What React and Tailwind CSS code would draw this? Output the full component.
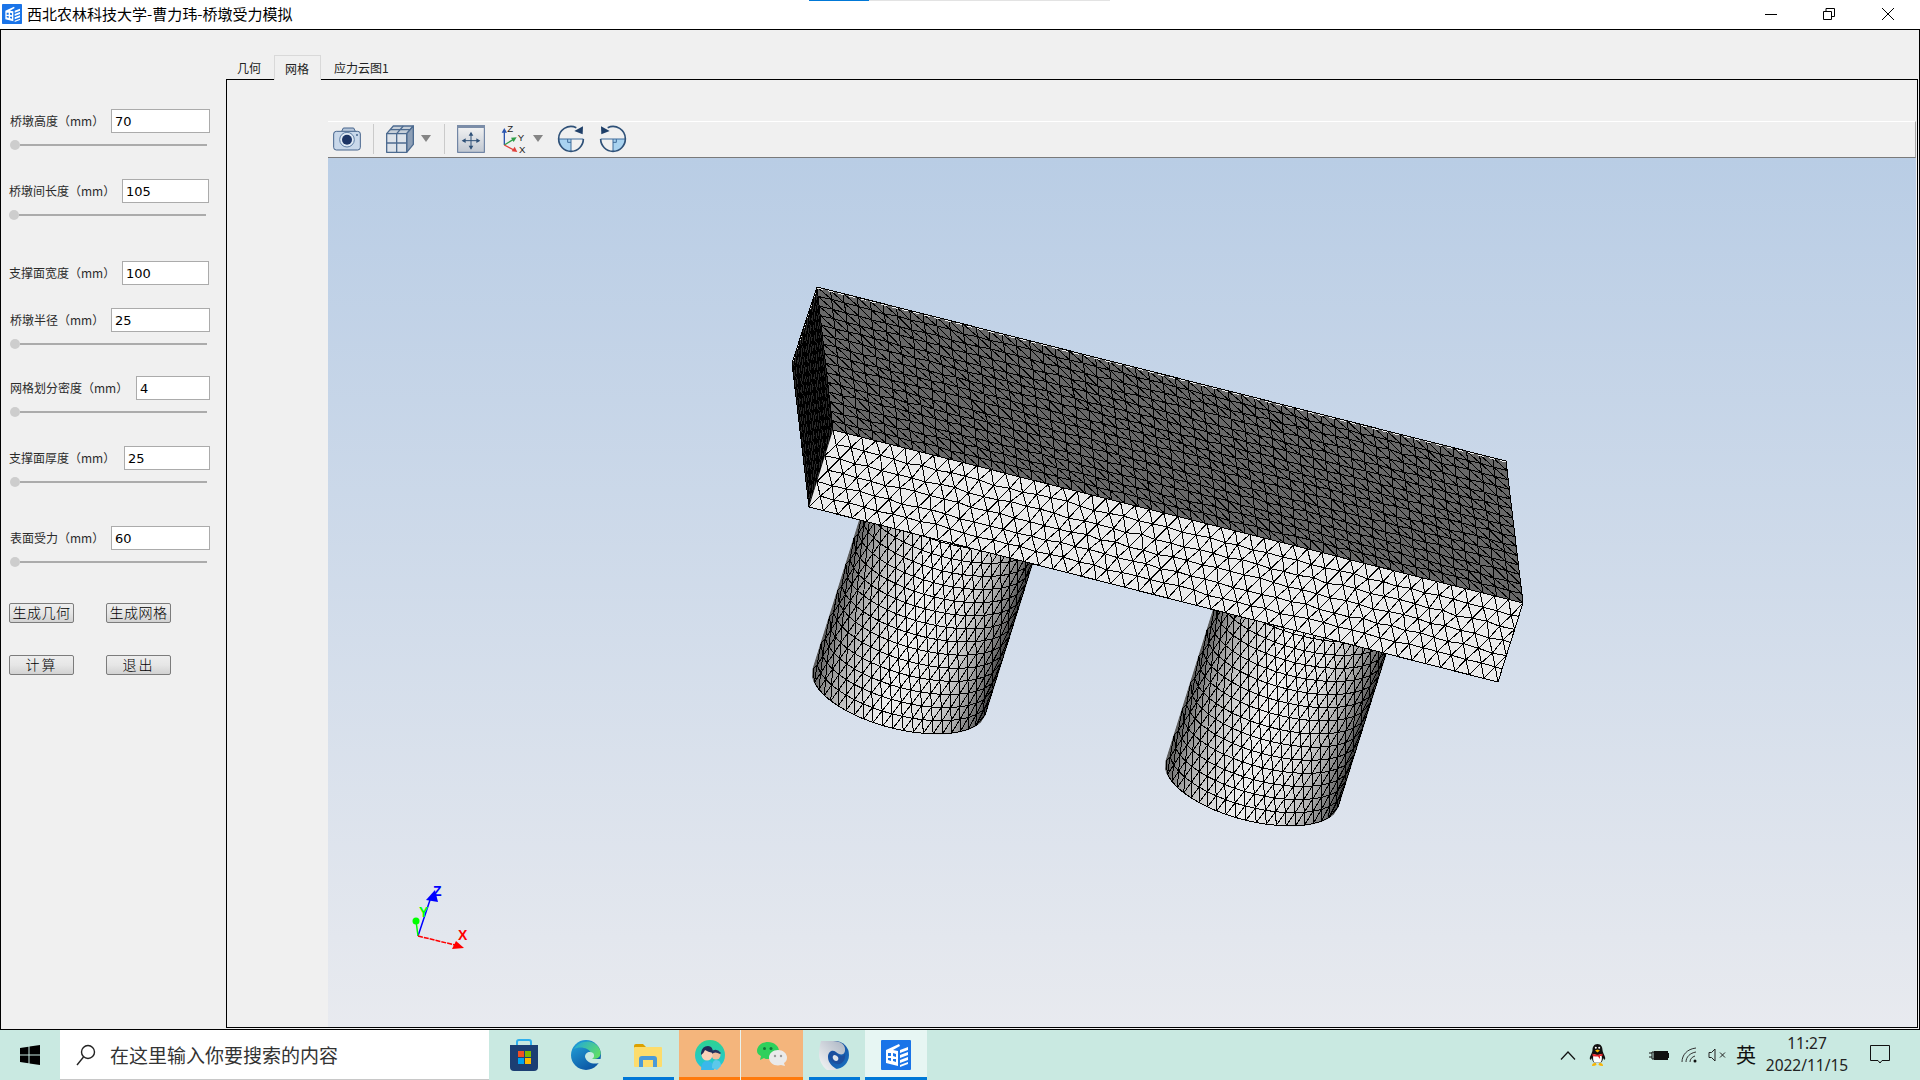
import React from 'react';

const cjk = "font-['Noto_Sans_CJK_SC',sans-serif]";

// ---------- mesh helpers ----------
const mix = (a, b, t) => [a[0] + (b[0] - a[0]) * t, a[1] + (b[1] - a[1]) * t];
const wobble = (i, j, k) => {
  const s = Math.sin(i * 12.9898 + j * 78.233 + k) * 43758.5453;
  return s - Math.floor(s) - 0.5;
};

function quadMesh(p00, p10, p01, p11, cols, rows, amount, stagger) {
  const pts = [];
  for (let j = 0; j <= rows; j++) {
    const row = [];
    for (let i = 0; i <= cols; i++) {
      const u = Math.min(1, (i + (stagger && j % 2 ? 0.5 : 0)) / cols);
      const p = mix(mix(p00, p10, u), mix(p01, p11, u), j / rows);
      const inner = i > 0 && i < cols && j > 0 && j < rows;
      row.push(inner ? [p[0] + wobble(i, j, 1) * amount, p[1] + wobble(i, j, 7) * amount] : p);
    }
    pts.push(row);
  }
  return meshPath(pts, stagger);
}

// stagger: every other row is shifted half a cell, so the diagonal flips row by row
function meshPath(pts, stagger) {
  const f = (p) => `${p[0].toFixed(1)} ${p[1].toFixed(1)}`;
  let d = '';
  pts.forEach((row, j) => {
    row.forEach((p, i) => {
      if (i < row.length - 1) d += `M${f(p)}L${f(row[i + 1])}`;
      if (j < pts.length - 1) {
        d += `M${f(p)}L${f(pts[j + 1][i])}`;
        if (i < row.length - 1) {
          const down = stagger ? j % 2 === 1 : true;
          d += down ? `M${f(p)}L${f(pts[j + 1][i + 1])}` : `M${f(row[i + 1])}L${f(pts[j + 1][i])}`;
        }
      }
    });
  });
  return d;
}

const stops = [[0, 85], [0.1, 150], [0.25, 205], [0.45, 238], [0.7, 222], [0.85, 170], [0.95, 115], [1, 60]];
function shade(f) {
  for (let i = 1; i < stops.length; i++) {
    if (f <= stops[i][0]) {
      const t = (f - stops[i - 1][0]) / (stops[i][0] - stops[i - 1][0]);
      const v = Math.round(stops[i - 1][1] + (stops[i][1] - stops[i - 1][1]) * t);
      return `rgb(${v},${v},${v})`;
    }
  }
  return 'rgb(60,60,60)';
}

function cylinder(cx, cy) {
  const cols = 21;
  const rows = 16;
  const spot = (u) => 0.4 * -Math.cos(Math.PI * u) + 0.6 * (2 * u - 1);
  const pts = [];
  for (let j = 0; j <= rows; j++) {
    const t = (j / rows) * 1.4;
    const row = [];
    for (let i = 0; i <= cols; i++) {
      const u = Math.min(1, (i + (j % 2 ? 0.5 : 0)) / cols);
      const c = spot(u);
      const s = Math.sqrt(Math.max(0, 1 - c * c));
      row.push([cx + 86 * c - 11 * s + 47 * t, cy + 23 * c + 35 * s - 150 * t]);
    }
    pts.push(row);
  }
  // shading strips are finer than the mesh
  const strips = [];
  const n = 48;
  const at = (u, t) => {
    const c = spot(u);
    const s = Math.sqrt(Math.max(0, 1 - c * c));
    return [cx + 86 * c - 11 * s + 47 * t, cy + 23 * c + 35 * s - 150 * t];
  };
  for (let i = 0; i < n; i++) {
    const a = at(i / n, 0), b = at((i + 1) / n, 0), c = at((i + 1) / n, 1.4), e = at(i / n, 1.4);
    strips.push({
      points: [a, b, c, e].map((p) => p.join(',')).join(' '),
      fill: shade((1 + spot((i + 0.5) / n)) / 2),
    });
  }
  return { strips, d: meshPath(pts, true) };
}

const A = [817, 287], B = [1506, 461], C = [1523, 603], D = [833, 430], E = [792, 363], F = [809, 507], G = [1498, 682];
const topMesh = quadMesh(A, B, D, C, 52, 15, 1.5, false);
const leftMesh = quadMesh(A, E, D, F, 7, 15, 0.5, false);
const frontMesh = quadMesh(D, C, F, G, 48, 6, 2.5, true);
const pier1 = cylinder(899, 692);
const pier2 = cylinder(1252, 784);

function Pier({ data }) {
  return (
    <g>
      {data.strips.map((s, i) => <polygon key={i} points={s.points} fill={s.fill} stroke={s.fill} />)}
      <path d={data.d} stroke="#000" fill="none" shapeRendering="crispEdges" />
    </g>
  );
}

function Model() {
  const pts = (...p) => p.map((q) => q.join(',')).join(' ');
  return (
    <svg className="block w-[1588px] h-[869px]" viewBox="328 158 1588 869">
      <Pier data={pier1} />
      <Pier data={pier2} />
      <polygon points={pts(A, E, F, D)} fill="#2a2a2a" />
      <path d={leftMesh} stroke="#000" fill="none" shapeRendering="crispEdges" />
      <polygon points={pts(A, B, C, D)} fill="#686868" />
      <path d={topMesh} stroke="#000" fill="none" shapeRendering="crispEdges" />
      <polygon points={pts(D, C, G, F)} fill="#ebebeb" />
      <path d={frontMesh} stroke="#000" fill="none" shapeRendering="crispEdges" />
      <polyline points="793,361 817,288 1506,462" fill="none" stroke="#eee" strokeDasharray="6 5" shapeRendering="crispEdges" />
      <polygon points={pts(A, B, C, G, F, E)} fill="none" stroke="#000" shapeRendering="crispEdges" />

      {/* orientation marker */}
      <line x1="418" y1="936" x2="431" y2="897" stroke="#0000ff" strokeWidth="1.5" />
      <polygon points="435,890 438,902 426,900" fill="#0000ff" />
      <line x1="418" y1="936" x2="416" y2="921" stroke="#00ff00" strokeWidth="1.5" />
      <circle cx="416" cy="921" r="3.5" fill="#00ff00" />
      <line x1="418" y1="936" x2="455" y2="945" stroke="#ff0000" strokeWidth="1.5" strokeDasharray="5 1" />
      <polygon points="464,948 452,949 456,941" fill="#ff0000" />
      <text x="433" y="896" fontSize="14" fontWeight="700" fill="#0000ff" fontFamily="Liberation Sans, sans-serif">Z</text>
      <text x="419" y="917" fontSize="14" fontWeight="700" fill="#00ff00" fontFamily="Liberation Sans, sans-serif">Y</text>
      <text x="458" y="940" fontSize="14" fontWeight="700" fill="#ff0000" fontFamily="Liberation Sans, sans-serif">X</text>
    </svg>
  );
}

// ---------- toolbar icons ----------
function CameraIcon() {
  return (
    <svg width="28" height="24" viewBox="0 0 84 72" className="shrink-0">
      <path d="M26 13L31 3H62L67 13" fill="#b7c7da" stroke="#46648c" strokeWidth="3" />
      <rect x="2" y="13" width="80" height="56" rx="8" fill="#c9d8ea" stroke="#46648c" strokeWidth="3" />
      <circle cx="42" cy="38" r="22" fill="#e0eaf5" stroke="#5e7ea5" strokeWidth="3" />
      <circle cx="42" cy="38" r="15" fill="#1d3566" />
      <circle cx="72" cy="24" r="3" fill="#44648c" />
    </svg>
  );
}

function CubeIcon() {
  return (
    <svg width="28" height="28" viewBox="0 0 84 84" className="shrink-0">
      <g stroke="#4d6b90" strokeWidth="4" strokeLinejoin="round">
        <polygon points="2,26 22,3 82,3 62,26" fill="#c6cfd9" />
        <polygon points="62,26 82,3 82,58 62,82" fill="#8d9fb6" />
        <rect x="2" y="26" width="60" height="56" fill="#dde3ea" />
        <path d="M32 26V82M2 54H62M32 26L52 3M12 14H72" fill="none" />
      </g>
    </svg>
  );
}

function PanIcon() {
  return (
    <svg width="28" height="28" viewBox="0 0 84 84" className="shrink-0">
      <defs>
        <linearGradient id="panBg" x1="0" y1="0" x2="0" y2="1">
          <stop offset="0" stopColor="#f4f4f4" />
          <stop offset="1" stopColor="#c0c7d1" />
        </linearGradient>
      </defs>
      <rect x="2" y="2" width="80" height="80" fill="url(#panBg)" stroke="#5b7398" strokeWidth="3" />
      <rect x="0" y="0" width="84" height="9" fill="#7b8da8" />
      <path d="M18 47H66M42 24V70" stroke="#2f5178" strokeWidth="3" />
      <path d="M14 47L26 40V54ZM70 47L58 40V54ZM42 20L35 32H49ZM42 74L35 62H49Z" fill="#2f5178" />
    </svg>
  );
}

function AxesIcon() {
  return (
    <svg width="26" height="30" viewBox="0 0 78 90" className="shrink-0">
      <path d="M13 63V22" stroke="#2a55b0" strokeWidth="4" />
      <path d="M13 12L5 26H21Z" fill="#2a55b0" />
      <path d="M13 63L40 46" stroke="#2f9e48" strokeWidth="4" />
      <path d="M50 40L33 41L41 54Z" fill="#2f9e48" />
      <path d="M13 63L42 78" stroke="#e0403a" strokeWidth="4" />
      <path d="M52 84L44 68L35 82Z" fill="#e0403a" />
      <g fontFamily="Liberation Sans, sans-serif" fontSize="29" fill="#222">
        <text x="22" y="24">Z</text>
        <text x="53" y="50">Y</text>
        <text x="57" y="88">X</text>
      </g>
    </svg>
  );
}

function RotateIcon({ flip }) {
  return (
    <svg width="28" height="28" viewBox="0 0 84 84" className={flip ? 'shrink-0 -scale-x-100' : 'shrink-0'}>
      <path d="M5 42H42V79A37 37 0 0 1 5 42Z" fill="#a9d3f0" />
      <path d="M5 42H79M42 42V79M32 42V52H42" fill="none" stroke="#3f6d9c" strokeWidth="3" />
      <path d="M79 42A37 37 0 1 1 5 42A37 37 0 0 1 58 8" fill="none" stroke="#2f5178" strokeWidth="5" />
      <path d="M78 4L77 28L52 18Z" fill="#1f3f68" />
    </svg>
  );
}

function Caret() {
  return (
    <svg width="10" height="7" viewBox="0 0 10 7" className="shrink-0">
      <polygon points="0,0 10,0 5,7" fill="#858585" />
    </svg>
  );
}

function AppIcon({ size }) {
  return (
    <svg width={size} height={size} viewBox="0 0 30 30" className="shrink-0">
      <rect width="30" height="30" rx="1" fill="#1a74e8" />
      <path d="M5 10L18 4L19 6L12 10L17 11V26L5 23Z" fill="#fff" />
      <path d="M19 10L27 7V10L19 13ZM19 15L27 12V15L19 18ZM19 20L27 17V20L19 23ZM19 25L27 22V24L19 27Z" fill="#fff" />
      <path d="M7 13L10 13V16L7 16ZM12 13L15 14V17L12 16ZM7 18L10 18V21L7 20ZM12 19L15 19V22L12 21Z" fill="#1a74e8" />
    </svg>
  );
}

// ---------- taskbar icons ----------
function StoreIcon() {
  return (
    <svg width="30" height="32" viewBox="0 0 30 32">
      <path d="M8 7V3Q8 1 10 1H20Q22 1 22 3V7" fill="none" stroke="#2fb0ee" strokeWidth="2" />
      <path d="M1 6H29V28Q29 32 25 32H5Q1 32 1 28Z" fill="#1c3f73" />
      <rect x="9" y="12" width="6" height="6" fill="#f25022" />
      <rect x="16" y="12" width="6" height="6" fill="#7fba00" />
      <rect x="9" y="19" width="6" height="6" fill="#00a4ef" />
      <rect x="16" y="19" width="6" height="6" fill="#ffb900" />
    </svg>
  );
}

function EdgeIcon() {
  return (
    <svg width="30" height="30" viewBox="0 0 30 30">
      <defs>
        <linearGradient id="edgeA" x1="0" y1="0" x2="0.6" y2="1">
          <stop offset="0" stopColor="#25a8dd" />
          <stop offset="1" stopColor="#0b56a4" />
        </linearGradient>
        <linearGradient id="edgeB" x1="0" y1="0" x2="1" y2="0.6">
          <stop offset="0" stopColor="#1fa6df" />
          <stop offset="1" stopColor="#5fdc6a" />
        </linearGradient>
      </defs>
      <circle cx="15" cy="15" r="15" fill="url(#edgeA)" />
      <path d="M3 9C8 0 24 -2 29 10C31 15 28 19 23 19L17 19C21 17 21 11 16 9C12 7 7 7 3 9Z" fill="url(#edgeB)" />
      <path d="M14 17C14 12 19 11 22 13C24 15 23 18 21 19L30 19L30 22C25 25 16 24 14 17Z" fill="#c9e9e1" />
    </svg>
  );
}

function FolderIcon() {
  return (
    <svg width="28" height="23" viewBox="0 0 28 23">
      <path d="M0 2Q0 0 2 0H9L13 4H0Z" fill="#dca100" />
      <rect y="3" width="28" height="20" rx="1" fill="#fddc6b" />
      <path d="M5 23V15Q5 12 8 12H20Q23 12 23 15V23H19V16H9V23Z" fill="#4a9ad8" />
    </svg>
  );
}

function AvatarIcon() {
  return (
    <svg width="30" height="30" viewBox="0 0 30 30">
      <defs>
        <linearGradient id="avaBg" x1="0" y1="0" x2="0" y2="1">
          <stop offset="0" stopColor="#2dd391" />
          <stop offset="1" stopColor="#22c3e0" />
        </linearGradient>
      </defs>
      <circle cx="15" cy="15" r="15" fill="url(#avaBg)" />
      <path d="M6 30Q6 21 12 21Q19 21 19 30Z" fill="#3ab8ea" />
      <path d="M17 28Q17 20 21 20Q26 20 26 26L22 30Z" fill="#5cc8ea" />
      <circle cx="21" cy="15" r="4.5" fill="#f1bd9c" />
      <path d="M16 12Q21 7 26 13L25 14Q20 11 17 14Z" fill="#27335e" />
      <circle cx="12" cy="15" r="5.5" fill="#fad2ba" />
      <path d="M6 13Q7 6 13 6Q18 6 18 13Q13 12 10 10Q9 13 6 15Z" fill="#202c58" />
    </svg>
  );
}

function WechatIcon() {
  return (
    <svg width="30" height="27" viewBox="0 0 30 27">
      <path d="M11 0C17 0 22 4 22 9C22 14 17 17 11 17C9.500 17 8 17 7 16L3 18L4 14C1.500 13 0 11 0 9C0 4 5 0 11 0Z" fill="#2fd05c" />
      <circle cx="7.500" cy="6.500" r="1.500" fill="#12753a" />
      <circle cx="14" cy="6.500" r="1.500" fill="#12753a" />
      <path d="M21 8C26 8 30 11.500 30 15.500C30 18 29 20 27 21L28 24L24 23C23 23.300 22 23.500 21 23.500C16 23.500 12 20 12 15.500C12 11.500 16 8 21 8Z" fill="#eaeaea" />
      <circle cx="18" cy="14" r="1.200" fill="#999" />
      <circle cx="24" cy="14" r="1.200" fill="#999" />
    </svg>
  );
}

function SwirlIcon() {
  return (
    <svg width="30" height="30" viewBox="0 0 30 30">
      <defs>
        <linearGradient id="swirlA" x1="0" y1="0" x2="1" y2="1">
          <stop offset="0" stopColor="#123a8c" />
          <stop offset="1" stopColor="#1a74c4" />
        </linearGradient>
        <linearGradient id="swirlB" x1="0" y1="1" x2="1" y2="0">
          <stop offset="0" stopColor="#f7f7f7" />
          <stop offset="1" stopColor="#aab4c2" />
        </linearGradient>
      </defs>
      <circle cx="16" cy="15" r="14" fill="url(#swirlA)" />
      <path d="M2 1H14C22 1 27 5 26 11C25 16 20 15 17 12C13 9 9 12 9 17C9 23 14 27 19 30H8C3 26 0 20 0 14C0 9 1 5 2 1Z" fill="url(#swirlB)" />
      <path d="M11 16C11 11 15 11 18 14C21 17 25 17 26 13C27 20 23 25 18 24C14 23 11 20 11 16Z" fill="#1c4f9e" />
      <path d="M14 16C15 14 17 15 19 17C20 19 19 21 17 21C15 21 13 18 14 16Z" fill="#dfe4ea" />
    </svg>
  );
}

function PenguinIcon() {
  return (
    <svg width="17" height="22" viewBox="0 0 17 22">
      <path d="M8.500 0C12 0 13.500 3 13.500 6C13.500 8 15 10 16 13C16.500 15 16 16 15 15.500L14 14C14 16 13 18 12 18.500H5C4 18 3 16 3 14L2 15.500C1 16 0.500 15 1 13C2 10 3.500 8 3.500 6C3.500 3 5 0 8.500 0Z" fill="#111" />
      <path d="M5 10C7 11.500 10 11.500 12 10C13.500 13 13 17 11.500 18.500H5.500C4 17 3.500 13 5 10Z" fill="#fff" />
      <path d="M3.500 9.500C6 11 11 11 13.500 9.500L13.500 12L11 12L11 15L9 12.500C7 12.500 5 12.500 3.500 12Z" fill="#e5262b" />
      <path d="M6 6.500L8.500 5.500L11 6.500L8.500 8.500Z" fill="#f7b500" />
      <circle cx="6.800" cy="3.800" r="1" fill="#fff" />
      <circle cx="10.200" cy="3.800" r="1" fill="#fff" />
      <path d="M3 22Q3 18.500 7 19L7.500 21Q6 22 3 22ZM14 22Q14 18.500 10 19L9.500 21Q11 22 14 22Z" fill="#f7b500" />
    </svg>
  );
}

// ---------- sidebar pieces ----------
function Field({ label, value, mt, left, width, inputW, slider }) {
  return (
    <div className={mt}>
      <div className={`flex items-center justify-between ${left} ${width}`}>
        <span className={`${cjk} text-[12px] leading-none text-[#2b2b2b] whitespace-nowrap`}>{label}</span>
        <div className={`${inputW} h-6 border border-[#ababab] bg-white pl-[3px] font-['DejaVu_Sans',sans-serif] text-[13px] leading-[24px] text-black`}>{value}</div>
      </div>
      {slider && (
        <div className={`flex items-center h-[10px] mt-[7px] ${slider}`}>
          <div className="w-[10px] h-[10px] rounded-full bg-[#cdcdcd] shrink-0" />
          <div className="flex-1 h-[2px] bg-[#ababab]" />
        </div>
      )}
    </div>
  );
}

function Btn({ children, spread }) {
  return (
    <button className={`w-[65px] h-5 pb-[2px] flex items-center justify-center rounded-[2px] border border-[#7c7c7c] bg-linear-to-b from-[#eeeeee] via-[#e6e6e6] to-[#d2d2d2] ${cjk} text-[14px] leading-none text-black font-light ${spread ? 'tracking-[0.5px]' : 'tracking-[2px]'}`}>
      {children}
    </button>
  );
}

function Sidebar() {
  return (
    <div className="w-[225px] shrink-0">
      <Field mt="mt-[79px]" label="桥墩高度（mm）" value="70" left="ml-[9px]" width="w-[200px]" inputW="w-[99px]" slider="ml-[9px] w-[197px]" />
      <Field mt="mt-[29px]" label="桥墩间长度（mm）" value="105" left="ml-[8px]" width="w-[200px]" inputW="w-[87px]" slider="ml-[8px] w-[197px]" />
      <Field mt="mt-[41px]" label="支撑面宽度（mm）" value="100" left="ml-[8px]" width="w-[200px]" inputW="w-[87px]" />
      <Field mt="mt-[23px]" label="桥墩半径（mm）" value="25" left="ml-[9px]" width="w-[200px]" inputW="w-[99px]" slider="ml-[9px] w-[197px]" />
      <Field mt="mt-[27px]" label="网格划分密度（mm）" value="4" left="ml-[9px]" width="w-[200px]" inputW="w-[74px]" slider="ml-[9px] w-[197px]" />
      <Field mt="mt-[29px]" label="支撑面厚度（mm）" value="25" left="ml-[8px]" width="w-[201px]" inputW="w-[86px]" slider="ml-[9px] w-[197px]" />
      <Field mt="mt-[39px]" label="表面受力（mm）" value="60" left="ml-[9px]" width="w-[200px]" inputW="w-[99px]" slider="ml-[9px] w-[197px]" />
      <div className="flex gap-8 ml-2 mt-9">
        <Btn spread>生成几何</Btn>
        <Btn spread>生成网格</Btn>
      </div>
      <div className="flex gap-8 ml-2 mt-8">
        <Btn>计算</Btn>
        <Btn>退出</Btn>
      </div>
    </div>
  );
}

function Tabs() {
  const tab = `${cjk} text-[12px] leading-none text-[#222] whitespace-nowrap`;
  return (
    <div className="h-[49px] flex items-end shrink-0">
      <div className={`w-[48px] h-6 pl-[11px] pt-[7px] ${tab}`}>几何</div>
      <div className={`relative z-10 w-[47px] h-[25px] -mb-px pl-[10px] pt-[7px] border-x border-t border-[#d9d9d9] bg-[#f0f0f0] ${tab}`}>网格</div>
      <div className={`h-6 pl-[13px] pt-[7px] ${tab}`}>应力云图1</div>
    </div>
  );
}

function Toolbar() {
  return (
    <div className="h-[37px] shrink-0 flex items-center pb-[2px] border-t border-t-white border-b border-b-[#7a7a7a] border-r border-r-[#a5a5a5] bg-[#f0f0f0]">
      <div className="ml-[5px]"><CameraIcon /></div>
      <div className="ml-3 w-px h-[30px] bg-[#cacaca]" />
      <div className="ml-3"><CubeIcon /></div>
      <div className="ml-[7px]"><Caret /></div>
      <div className="ml-[13px] w-px h-[30px] bg-[#cacaca]" />
      <div className="ml-3"><PanIcon /></div>
      <div className="ml-[15px]"><AxesIcon /></div>
      <div className="ml-[7px]"><Caret /></div>
      <div className="ml-[14px]"><RotateIcon /></div>
      <div className="ml-[14px]"><RotateIcon flip /></div>
    </div>
  );
}

function TaskSlot({ children, mark, bg }) {
  return (
    <div className={`relative w-[62px] h-[50px] flex items-center justify-center ${bg || ''}`}>
      {children}
      {mark && <div className={`absolute bottom-0 h-[3px] ${mark}`} />}
    </div>
  );
}

function Taskbar() {
  return (
    <div className="h-[50px] shrink-0 flex items-center bg-[#c9e9e1]">
      <div className="w-[60px] flex justify-center">
        <svg width="20" height="20" viewBox="0 0 20 20">
          <path d="M0 3L8.500 1.800V9.500H0ZM9.500 1.600L20 0V9.500H9.500ZM0 10.500H8.500V18.200L0 17ZM9.500 10.500H20V20L9.500 18.400Z" fill="#000" />
        </svg>
      </div>
      <div className="w-[429px] h-[50px] flex items-center bg-white border-b border-[#c8c8c8]">
        <svg width="20" height="22" viewBox="0 0 20 22" className="ml-[16px]">
          <circle cx="12" cy="8" r="6.500" fill="none" stroke="#222" strokeWidth="1.400" />
          <path d="M7.500 13L1 21" stroke="#222" strokeWidth="1.400" />
        </svg>
        <span className={`ml-[14px] ${cjk} text-[19px] leading-none text-[#333] whitespace-nowrap`}>在这里输入你要搜索的内容</span>
      </div>
      <div className="flex ml-1">
        <TaskSlot><StoreIcon /></TaskSlot>
        <TaskSlot><EdgeIcon /></TaskSlot>
        <TaskSlot mark="left-[6px] right-[5px] bg-[#0078d7]"><FolderIcon /></TaskSlot>
        <TaskSlot bg="bg-[#f4b57c] border-r border-[#e8f2ee]" mark="left-0 right-0 bg-[#ff7a0c]"><AvatarIcon /></TaskSlot>
        <TaskSlot bg="bg-[#f4b57c]" mark="left-0 right-0 bg-[#ff7a0c]"><WechatIcon /></TaskSlot>
        <TaskSlot mark="left-[6px] right-[5px] bg-[#0078d7]"><SwirlIcon /></TaskSlot>
        <TaskSlot bg="bg-[#e7f6f3]" mark="left-0 right-0 bg-[#0078d7]"><AppIcon size={30} /></TaskSlot>
      </div>

      <div className="flex items-center ml-auto h-full">
        <svg width="16" height="9" viewBox="0 0 16 9" fill="none" stroke="#111" strokeWidth="1.200">
          <path d="M1 8.500L8 1L15 8.500" />
        </svg>
        <div className="ml-[13px]"><PenguinIcon /></div>
        <svg width="20" height="11" viewBox="0 0 20 11" className="ml-[43px]">
          <path d="M0 3H3M0 7H3M3 2H5V9H3Z" fill="none" stroke="#111" />
          <rect x="5" y="1" width="14" height="9" fill="#111" />
          <rect x="19" y="3" width="1" height="5" fill="#111" />
        </svg>
        <svg width="16" height="16" viewBox="0 0 16 16" fill="none" stroke="#333" className="ml-[12px]">
          <path d="M1 15C1 8 6 2 15 1M5 15C5 10 9 6 15 5M9 15C9 12 11 10 14 9" />
          <circle cx="14" cy="14" r="1.500" fill="#111" stroke="none" />
        </svg>
        <svg width="18" height="14" viewBox="0 0 18 14" fill="none" stroke="#222" className="ml-[11px]">
          <path d="M1 4.500H3.500L7 1V13L3.500 9.500H1Z" />
          <path d="M12 4.500L17 9.500M17 4.500L12 9.500" />
        </svg>
        <span className={`ml-[10px] ${cjk} text-[20px] leading-none text-[#111]`}>英</span>
        <div className="ml-2 -mt-[2px] w-[86px] flex flex-col items-center font-['Noto_Sans',sans-serif] text-[15.5px] leading-[22px] text-[#222]">
          <span>11:27</span>
          <span>2022/11/15</span>
        </div>
        <svg width="20" height="20" viewBox="0 0 20 20" fill="none" stroke="#111" className="ml-5 mr-[30px] -mt-px">
          <path d="M0.500 0.500H19.500V15.500H12L10 18L8 15.500H0.500Z" />
        </svg>
      </div>
    </div>
  );
}

export default function App() {
  return (
    <div className="relative w-[1920px] h-[1080px] flex flex-col overflow-hidden bg-white">
      <div className="absolute left-[809px] top-0 w-[301px] h-px bg-[#e3e3e3]">
        <div className="w-[60px] h-px bg-[#0078d7]" />
      </div>

      {/* title bar */}
      <div className="h-[29px] shrink-0 flex items-center pb-[2px] bg-white">
        <div className="ml-[2px]"><AppIcon size={20} /></div>
        <span className={`ml-[5px] ${cjk} text-[15px] leading-none text-black whitespace-nowrap`}>西北农林科技大学-曹力玮-桥墩受力模拟</span>
        <div className="ml-auto flex items-center">
          <svg width="12" height="12" viewBox="0 0 12 12" stroke="#000" fill="none"><path d="M0 6.500H12" /></svg>
          <svg width="12" height="12" viewBox="0 0 12 12" stroke="#000" fill="none" className="ml-[46px]">
            <path d="M0.500 3.500H8.500V11.500H0.500ZM3 3V0.500H11.500V8.500H9" />
          </svg>
          <svg width="12" height="12" viewBox="0 0 12 12" stroke="#000" fill="none" className="ml-[47px] mr-[26px]">
            <path d="M0 0L12 12M12 0L0 12" />
          </svg>
        </div>
      </div>

      {/* main window */}
      <div className="h-[1001px] shrink-0 flex border border-black bg-[#f0f0f0]">
        <Sidebar />
        <div className="flex-1 flex flex-col mr-px mb-px min-w-0">
          <Tabs />
          <div className="flex-1 flex flex-col border border-black pt-[41px] pl-[101px] pr-px min-h-0">
            <Toolbar />
            <div className="flex-1 overflow-hidden bg-linear-to-b from-[#b9cde5] to-[#e8eaef]">
              <Model />
            </div>
          </div>
        </div>
      </div>

      <Taskbar />
    </div>
  );
}
